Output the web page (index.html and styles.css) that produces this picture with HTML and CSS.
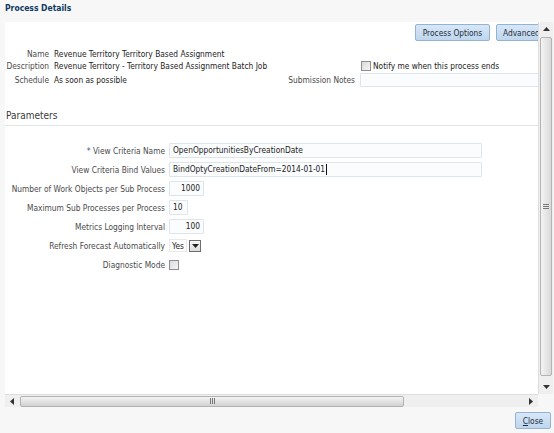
FILE: index.html
```html
<!DOCTYPE html>
<html>
<head>
<meta charset="utf-8">
<link rel="stylesheet" href="styles.css">
</head>
<body>
<div class="title">Process Details</div>
<div class="frame">
  <div class="main">
    <div class="viewport">
      <div class="content">
        <div class="toolbar">
          <button class="btn btn-po">Process Options</button>
          <button class="btn btn-adv">Advanced</button>
        </div>
        <div class="info">
          <div class="lbl">Name</div>
          <div class="val">Revenue Territory Territory Based Assignment</div>
          <div></div>
          <div></div>
          <div class="lbl">Description</div>
          <div class="val">Revenue Territory - Territory Based Assignment Batch Job</div>
          <div></div>
          <div class="notify"><span class="chk"></span><span>Notify me when this process ends</span></div>
          <div class="lbl">Schedule</div>
          <div class="val">As soon as possible</div>
          <div class="lbl">Submission Notes</div>
          <div class="notes"></div>
        </div>
        <div class="section-head">Parameters</div>
        <div class="form">
          <div class="flbl"><span class="req">*</span> View Criteria Name</div>
          <div class="inp wide">OpenOpportunitiesByCreationDate</div>
          <div class="flbl">View Criteria Bind Values</div>
          <div class="inp wide">BindOptyCreationDateFrom=2014-01-01<span class="caret"></span></div>
          <div class="flbl">Number of Work Objects per Sub Process</div>
          <div class="inp num">1000</div>
          <div class="flbl">Maximum Sub Processes per Process</div>
          <div class="inp small">10</div>
          <div class="flbl">Metrics Logging Interval</div>
          <div class="inp num">100</div>
          <div class="flbl">Refresh Forecast Automatically</div>
          <div class="select"><span class="sel-val">Yes</span><span class="sel-btn"><svg width="7" height="4" viewBox="0 0 7 4"><path d="M0 0H7L3.5 4Z" fill="#222"/></svg></span></div>
          <div class="flbl">Diagnostic Mode</div>
          <div class="chkcell"><span class="chk"></span></div>
        </div>
      </div>
    </div>
    <div class="vscroll">
      <div class="arrow"><svg width="7" height="4" viewBox="0 0 7 4"><path d="M0 4H7L3.5 0Z" fill="#333"/></svg></div>
      <div class="vthumb"><span class="grip-h"></span></div>
      <div class="arrow"><svg width="7" height="4" viewBox="0 0 7 4"><path d="M0 0H7L3.5 4Z" fill="#333"/></svg></div>
    </div>
  </div>
  <div class="hrow">
    <div class="hscroll">
      <div class="harrow"><svg width="4" height="7" viewBox="0 0 4 7"><path d="M4 0V7L0 3.5Z" fill="#333"/></svg></div>
      <div class="hthumb"><span class="grip-v"></span></div>
      <div class="htrack"></div>
      <div class="harrow"><svg width="4" height="7" viewBox="0 0 4 7"><path d="M0 0V7L4 3.5Z" fill="#333"/></svg></div>
    </div>
    <div class="corner"></div>
  </div>
</div>
<div class="footer">
  <button class="btn btn-close"><u>C</u>lose</button>
</div>
</body>
</html>
```
FILE: styles.css
```css
* { box-sizing: border-box; }
html, body { margin: 0; padding: 0; }
body {
  width: 554px;
  height: 433px;
  overflow: hidden;
  background: #f7f7f7;
  font-family: "DejaVu Sans", sans-serif;
  font-stretch: condensed;
  font-size: 8.3px;
  color: #3c3c3c;
}
.title {
  height: 22px;
  padding: 3px 0 0 5px;
  font-weight: bold;
  font-size: 8.5px;
  color: #0d3a62;
}
.frame { margin-left: 5px; width: 548px; }
.main { display: flex; height: 372px; }
.viewport { width: 533px; height: 372px; background: #fff; overflow: hidden; }
.content { width: 640px; padding-top: 2px; }
.toolbar { display: flex; gap: 6px; padding-left: 410px; height: 17px; }
.btn {
  height: 17px;
  border: 1px solid #93b3d3;
  border-radius: 2px;
  background: linear-gradient(#d8e7f6, #bed6ef);
  font: inherit;
  color: #1f2c3a;
  padding: 0 5px;
  line-height: 14px;
  cursor: default;
}
.btn-po { width: 75px; }
.btn-adv { width: 74px; text-align: left; padding-left: 6px; }
.info {
  display: grid;
  grid-template-columns: 44px 229px 67px 260px;
  grid-template-rows: 13px 12px 15px;
  column-gap: 5px;
  align-items: center;
  margin-top: 6px;
}
.lbl { text-align: right; color: #4a4a4a; white-space: nowrap; }
.val { color: #222; white-space: nowrap; }
.notify { display: flex; align-items: center; gap: 2px; color: #222; white-space: nowrap; margin-left: 1px; }
.notes {
  height: 14px;
  width: 250px;
  border: 1px solid #dde5ec;
  background: #fafcfd;
  border-radius: 1px;
}
.chk {
  display: inline-block;
  width: 10px;
  height: 10px;
  border: 1px solid #8e8e8e;
  background: linear-gradient(135deg, #dcdcdc, #f4f4f4);
}
.section-head {
  margin-top: 23px;
  padding: 0 0 3px 1px;
  font-size: 10px;
  line-height: 12px;
  color: #3a3a3a;
  border-bottom: 1px solid #dfe5ea;
  width: 533px;
}
.form {
  display: grid;
  grid-template-columns: 160px auto;
  grid-auto-rows: 15px;
  column-gap: 4px;
  row-gap: 4px;
  margin-top: 17px;
  align-items: center;
  justify-items: start;
}
.flbl { justify-self: end; text-align: right; color: #4a4a4a; white-space: nowrap; }
.req { color: #2a5a8c; }
.inp {
  height: 15px;
  border: 1px solid #dde5ec;
  background: #fafcfd;
  border-radius: 1px;
  color: #222;
  padding: 0 3px;
  line-height: 13px;
  white-space: nowrap;
  display: flex;
  align-items: center;
}
.wide { width: 313px; }
.num { width: 35px; justify-content: flex-end; }
.small { width: 19px; }
.caret { display: inline-block; width: 1px; height: 11px; background: #111; margin-left: 1px; }
.select { display: flex; align-items: center; height: 15px; gap: 2px; }
.sel-val {
  height: 13px;
  width: 18px;
  padding-left: 2px;
  line-height: 12px;
  color: #222;
  border: 1px solid #e6eaee;
}
.sel-btn {
  width: 12px;
  height: 12px;
  border: 1px solid #6d6d6d;
  background: linear-gradient(#f6f6f6, #dcdcdc);
  display: flex;
  align-items: center;
  justify-content: center;
}
.chkcell { display: flex; align-items: center; }
.vscroll {
  width: 15px;
  height: 372px;
  background: #efefef;
  border-left: 1px solid #dedede;
  display: flex;
  flex-direction: column;
  align-items: center;
}
.arrow { height: 14px; width: 14px; display: flex; align-items: center; justify-content: center; }
.vthumb {
  flex: 1;
  width: 12px;
  margin: 1px 0 4px;
  border: 1px solid #b3b3b3;
  border-radius: 2px;
  background: linear-gradient(90deg, #f3f3f3, #dadada);
  display: flex;
  align-items: center;
  justify-content: center;
}
.grip-h {
  width: 6px;
  height: 5px;
  background: repeating-linear-gradient(#777 0 1px, transparent 1px 2px);
}
.hrow { display: flex; height: 13px; }
.hscroll {
  width: 533px;
  height: 13px;
  background: #efefef;
  border-top: 1px solid #dedede;
  display: flex;
  align-items: center;
}
.harrow { width: 14px; height: 12px; display: flex; align-items: center; justify-content: center; }
.hthumb {
  width: 384px;
  height: 11px;
  margin-left: 1px;
  border: 1px solid #b3b3b3;
  border-radius: 2px;
  background: linear-gradient(#f3f3f3, #d2d2d2);
  display: flex;
  align-items: center;
  justify-content: center;
}
.htrack { flex: 1; }
.grip-v {
  width: 5px;
  height: 6px;
  background: repeating-linear-gradient(90deg, #777 0 1px, transparent 1px 2px);
}
.corner { flex: 1; background: #f7f7f7; }
.footer { height: 26px; display: flex; justify-content: flex-end; padding: 5px 3px 0 0; }
.btn-close { width: 36px; padding: 0; text-align: center; }
```
